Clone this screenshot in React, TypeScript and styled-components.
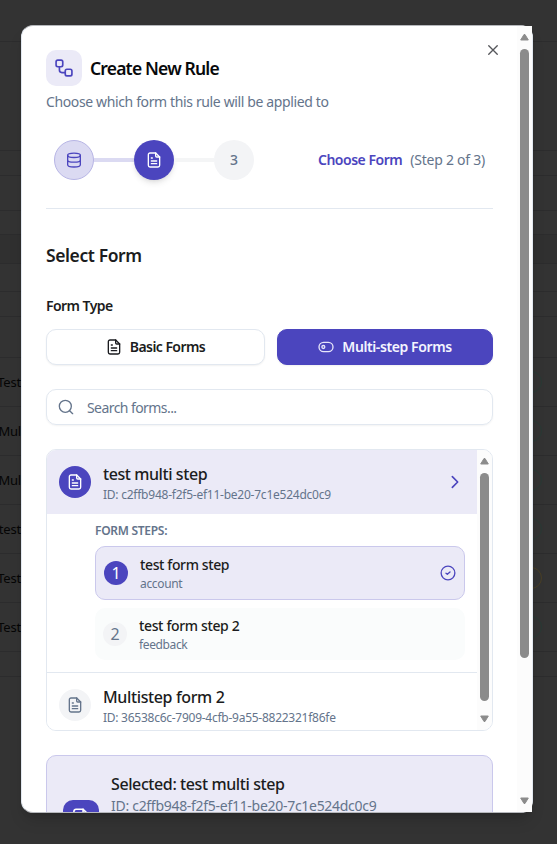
import React from "react";
import styled, { createGlobalStyle, css } from "styled-components";

const INDIGO = "#4b45be";
const LAVENDER = "#ebeaf7";
const MUTED = "#64748b";
const INK = "#1b1c20";
const BORDER = "#e2e8f0";

const GlobalStyle = createGlobalStyle`
  * { box-sizing: border-box; }
  html, body { margin: 0; height: 100%; overflow: hidden; }
  body { font-family: "Noto Sans", "Open Sans", sans-serif; color: ${INK}; background: #333; }
  #root { height: 100%; }
  p, h1, h2, h3 { margin: 0; }
  button { font: inherit; }
  svg { display: block; flex: none; }
`;

const Screen = styled.div`
  position: relative;
  width: 557px;
  height: 844px;
  overflow: hidden;
  background: #333;
`;

const Backdrop = styled.div`
  display: flex;
  flex-direction: column;
`;

const BackRow = styled.div<{ $h: number; $dark?: boolean }>`
  display: flex;
  align-items: center;
  justify-content: space-between;
  height: ${(p) => p.$h}px;
  flex: none;
  border-bottom: 1px solid #2c2c2d;
  background: ${(p) => (p.$dark ? "#303030" : "#333")};
`;

const BackText = styled.span`
  display: flex;
  justify-content: flex-end;
  width: 21px;
  font-size: 13px;
  letter-spacing: -0.2px;
  color: #050505;
  white-space: nowrap;
`;

const BackBadge = styled.span<{ $c: string }>`
  width: 40px;
  height: 22px;
  margin-right: 15px;
  border: 1px solid ${(p) => p.$c};
  border-radius: 11px;
`;

const Dialog = styled.section`
  position: absolute;
  left: 21px;
  top: 25px;
  width: 512px;
  height: 788px;
  display: flex;
  border: 1px solid ${BORDER};
  border-top-color: #b6b8bc;
  border-bottom-color: #b6b8bc;
  border-radius: 12px;
  background: #fff;
  box-shadow: 0 10px 15px -3px rgba(0, 0, 0, 0.15), 0 4px 6px -4px rgba(0, 0, 0, 0.15);
`;

const DialogBody = styled.div`
  width: 495px;
  height: 786px;
  padding: 24px;
  overflow: hidden;
  border-radius: 11px 0 0 11px;
`;

const Scrollbar = styled.div`
  display: flex;
  flex-direction: column;
  align-items: center;
  width: 15px;
  flex: none;
  background: #fcfcfc;
`;

const Thumb = styled.div<{ $h: number }>`
  width: 9px;
  height: ${(p) => p.$h}px;
  border-radius: 5px;
  background: #8b8b8b;
`;

const ArrowSlot = styled.div<{ $top: number; $bottom: number }>`
  padding: ${(p) => p.$top}px 0 ${(p) => p.$bottom}px;
`;

const Spacer = styled.div`
  flex: 1;
`;

const CloseButton = styled.button`
  position: absolute;
  right: 33px;
  top: 18px;
  padding: 0;
  border: 0;
  background: none;
  color: #55565a;
`;

const TitleRow = styled.header`
  display: flex;
  align-items: center;
  gap: 8px;
  height: 36px;
`;

const TitleIcon = styled.div`
  display: grid;
  place-items: center;
  width: 36px;
  height: 36px;
  border-radius: 10px;
  background: ${LAVENDER};
  color: ${INDIGO};
`;

type TextProps = { $size: number; $line: number; $weight?: number; $track?: number; $color?: string };
const textStyle = css<TextProps>`
  font-size: ${(p) => p.$size}px;
  line-height: ${(p) => p.$line}px;
  font-weight: ${(p) => p.$weight ?? 400};
  letter-spacing: ${(p) => p.$track ?? 0}px;
  color: ${(p) => p.$color ?? INK};
  white-space: nowrap;
`;

const Heading = styled.h2<TextProps>`
  ${textStyle}
`;

const Label = styled.p<TextProps>`
  ${textStyle}
`;

const Caption = styled(Label)`
  padding-top: 1px;
  margin-bottom: -1px;
`;

const Description = styled(Label)`
  margin-top: 6px;
`;

const Stepper = styled.div`
  display: flex;
  align-items: center;
  height: 97px;
  padding: 0 8px;
  border-bottom: 1px solid ${BORDER};
`;

const StepDot = styled.div<{ $state: "done" | "active" | "idle" }>`
  display: grid;
  place-items: center;
  width: 40px;
  height: 40px;
  flex: none;
  border-radius: 50%;
  ${(p) =>
    p.$state === "done"
      ? `background: #dbdaf2; border: 1px solid #b7b5e5; color: ${INDIGO};`
      : p.$state === "active"
        ? `background: ${INDIGO}; color: #fff; box-shadow: 0 4px 6px -1px rgba(0,0,0,.1), 0 2px 4px -2px rgba(0,0,0,.1);`
        : `background: #f3f4f6; color: ${MUTED};`}
`;

const StepLine = styled.div<{ $done?: boolean }>`
  width: 40px;
  height: 4px;
  background: ${(p) => (p.$done ? "#dbdaf2" : "#f4f5f6")};
`;

const StepCaption = styled.div`
  display: flex;
  gap: 8px;
  margin-left: auto;
`;

const SectionTitle = styled(Heading)`
  margin-top: 32px;
`;

const FieldLabel = styled(Label)`
  margin-top: 27px;
`;

const TypeRow = styled.div`
  display: grid;
  grid-template-columns: 219px 216px;
  gap: 12px;
  margin-top: 13px;
`;

const TypeButton = styled.button<{ $active?: boolean }>`
  display: flex;
  align-items: center;
  justify-content: center;
  gap: 8px;
  height: 36px;
  padding: 0;
  border: 1px solid ${(p) => (p.$active ? INDIGO : BORDER)};
  border-radius: 10px;
  background: ${(p) => (p.$active ? INDIGO : "#fff")};
  color: ${(p) => (p.$active ? "#e6e5fa" : INK)};
  box-shadow: 0 1px 2px rgba(0, 0, 0, 0.06);
`;

const SearchBox = styled.div`
  display: flex;
  align-items: center;
  gap: 13px;
  height: 36px;
  margin-top: 24px;
  padding: 0 11px;
  border: 1px solid ${BORDER};
  border-radius: 10px;
  box-shadow: 0 1px 2px rgba(0, 0, 0, 0.05);
  color: ${MUTED};
`;

const SearchText = styled(Label)`
  padding-top: 2px;
`;

const FormList = styled.div`
  display: flex;
  height: 282px;
  margin-top: 24px;
  overflow: hidden;
  border: 1px solid ${BORDER};
  border-radius: 10px;
`;

const ListContent = styled.div`
  width: 430px;
  overflow: hidden;
`;

const FormRow = styled.div<{ $active?: boolean }>`
  display: flex;
  align-items: center;
  gap: 12px;
  height: 64px;
  padding: 0 14px 0 12px;
  background: ${(p) => (p.$active ? LAVENDER : "#fff")};
  color: ${INDIGO};
`;

const RoundIcon = styled.div<{ $active?: boolean; $size: number }>`
  display: grid;
  place-items: center;
  flex: none;
  width: ${(p) => p.$size}px;
  height: ${(p) => p.$size}px;
  border-radius: 50%;
  background: ${(p) => (p.$active ? INDIGO : "#f3f4f6")};
  color: ${(p) => (p.$active ? "#fff" : MUTED)};
`;

const TextStack = styled.div`
  flex: 1;
  min-width: 0;
`;

const StepsPanel = styled.div`
  height: 159px;
  padding: 8px 12px 0 48px;
  border-bottom: 1px solid ${BORDER};
`;

const FormStep = styled.div<{ $active?: boolean }>`
  display: flex;
  align-items: center;
  gap: 12px;
  height: ${(p) => (p.$active ? 54 : 52)}px;
  margin-top: 8px;
  padding: 0 8px;
  border-radius: 10px;
  border: ${(p) => (p.$active ? "1px solid #cac8ec" : "0")};
  background: ${(p) => (p.$active ? LAVENDER : "#fafcfc")};
  color: ${INDIGO};
`;

const SelectedCard = styled.div`
  display: flex;
  gap: 12px;
  height: 110px;
  margin-top: 24px;
  padding: 17px 16px;
  border: 1px solid #cac8ec;
  border-radius: 10px;
  background: ${LAVENDER};
`;

const SelectedIcon = styled.div`
  display: grid;
  place-items: center;
  width: 36px;
  height: 36px;
  margin-top: 27px;
  border-radius: 10px;
  background: ${INDIGO};
  color: #fff;
`;

const Stroke = ({ size = 16, width = 1.5, children }: { size?: number; width?: number; children: React.ReactNode }) => (
  <svg width={size} height={size} viewBox="0 0 24 24" fill="none" stroke="currentColor" strokeWidth={width} strokeLinecap="round" strokeLinejoin="round">
    {children}
  </svg>
);

const DocIcon = ({ size = 16, width = 2 }: { size?: number; width?: number }) => (
  <Stroke size={size} width={width}>
    <path d="M14.5 1.5H6A2.5 2.5 0 0 0 3.5 4v16A2.5 2.5 0 0 0 6 22.5h12a2.5 2.5 0 0 0 2.5-2.5V7.5z" />
    <path d="M14.5 1.5V6A1.5 1.5 0 0 0 16 7.5h4.5M8 9h1.5M8 13.5h8M8 17.5h8" />
  </Stroke>
);

const FlowIcon = () => (
  <Stroke size={20} width={2}>
    <rect x="2.5" y="2.5" width="8" height="8" rx="2" />
    <rect x="13.5" y="13.5" width="8" height="8" rx="2" />
    <path d="M6.5 10.5v4a3 3 0 0 0 3 3h4" />
  </Stroke>
);

const DatabaseIcon = () => (
  <Stroke size={16} width={2}>
    <ellipse cx="12" cy="5" rx="9.5" ry="3.3" />
    <path d="M2.5 5v14c0 2 4 3.5 9.5 3.5s9.5-1.5 9.5-3.5V5M2.5 12c0 2 4 3.3 9.5 3.3s9.5-1.3 9.5-3.3" />
  </Stroke>
);

const ToggleIcon = () => (
  <Stroke size={16} width={2}>
    <rect x="1.5" y="5" width="21" height="14" rx="7" />
    <circle cx="8" cy="12" r="2.2" />
  </Stroke>
);

const SearchIcon = () => (
  <Stroke size={16} width={2}>
    <circle cx="11" cy="11" r="9" />
    <path d="m17.5 17.5 4.5 4.5" />
  </Stroke>
);

const ChevronIcon = () => (
  <Stroke size={16} width={2.5}>
    <path d="m8 4 8 8-8 8" />
  </Stroke>
);

const CheckIcon = () => (
  <Stroke size={16} width={2}>
    <circle cx="12" cy="12" r="10.3" />
    <path d="m9 12.3 2 1.7 4-3.5" />
  </Stroke>
);

const CloseIcon = () => (
  <Stroke size={12} width={2.7}>
    <path d="M3.5 3.5l17 17M20.5 3.5l-17 17" />
  </Stroke>
);

const ArrowIcon = ({ down }: { down?: boolean }) => (
  <svg width="9" height="8" viewBox="0 0 9 8" fill="#8b8b8b" stroke="#8b8b8b" strokeLinejoin="round">
    <path d={down ? "M.7 1h7.6L5 6.5H4z" : "M.7 7h7.6L5 1.5H4z"} />
  </svg>
);

const BADGE_GREEN = "#293a35";
const backRows: { h: number; dark?: boolean; text?: string; badge?: string }[] = [
  { h: 42 }, { h: 109 }, { h: 25 }, { h: 35 }, { h: 24 }, { h: 29, dark: true }, { h: 28 }, { h: 25 }, { h: 41 },
  { h: 49, text: "Test", badge: BADGE_GREEN },
  { h: 49, text: "Mul", badge: BADGE_GREEN },
  { h: 49, text: "Mul", badge: BADGE_GREEN },
  { h: 49, text: "test", badge: BADGE_GREEN },
  { h: 49, text: "Test", badge: "#493f25" },
  { h: 49, text: "Test", badge: BADGE_GREEN },
  { h: 25 },
];

export default function App() {
  return (
    <>
      <GlobalStyle />
      <Screen>
        <Backdrop>
          {backRows.map((r, i) => (
            <BackRow key={i} $h={r.h} $dark={r.dark}>
              {r.text && <BackText>{r.text}</BackText>}
              {r.badge && <BackBadge $c={r.badge} />}
            </BackRow>
          ))}
        </Backdrop>
        <Dialog>
          <DialogBody>
            <TitleRow>
              <TitleIcon><FlowIcon /></TitleIcon>
              <Heading $size={17.5} $line={28} $weight={600} $track={-0.82} $color="#08090b">Create New Rule</Heading>
            </TitleRow>
            <Description $size={14} $line={20} $track={-0.37} $color={MUTED}>Choose which form this rule will be applied to</Description>
            <Stepper>
              <StepDot $state="done"><DatabaseIcon /></StepDot>
              <StepLine $done />
              <StepDot $state="active"><DocIcon /></StepDot>
              <StepLine />
              <StepDot $state="idle"><Label as="span" $size={14} $line={20} $weight={500} $color={MUTED}>3</Label></StepDot>
              <StepCaption>
                <Label $size={14} $line={20} $weight={600} $track={-0.48} $color={INDIGO}>Choose Form</Label>
                <Label $size={14} $line={20} $track={-0.24} $color={MUTED}>(Step 2 of 3)</Label>
              </StepCaption>
            </Stepper>
            <SectionTitle $size={17.5} $line={28} $weight={600} $track={-0.4}>Select Form</SectionTitle>
            <FieldLabel $size={14} $line={20} $weight={600} $track={-0.55}>Form Type</FieldLabel>
            <TypeRow>
              <TypeButton>
                <DocIcon />
                <Label as="span" $size={14} $line={20} $weight={600} $track={-0.56}>Basic Forms</Label>
              </TypeButton>
              <TypeButton $active>
                <ToggleIcon />
                <Label as="span" $size={14} $line={20} $weight={600} $track={-0.4} $color="#f4f4ff">Multi-step Forms</Label>
              </TypeButton>
            </TypeRow>
            <SearchBox>
              <SearchIcon />
              <SearchText as="span" $size={14} $line={20} $track={-0.57} $color={MUTED}>Search forms...</SearchText>
            </SearchBox>
            <FormList>
              <ListContent>
                <FormRow $active>
                  <RoundIcon $active $size={32}><DocIcon /></RoundIcon>
                  <TextStack>
                    <Label $size={16} $line={24} $weight={500} $track={-0.42}>test multi step</Label>
                    <Caption $size={12} $line={16} $track={-0.24} $color={MUTED}>ID: c2ffb948-f2f5-ef11-be20-7c1e524dc0c9</Caption>
                  </TextStack>
                  <ChevronIcon />
                </FormRow>
                <StepsPanel>
                  <Caption $size={12} $line={16} $weight={600} $track={-0.28} $color={MUTED}>FORM STEPS:</Caption>
                  <FormStep $active>
                    <RoundIcon $active $size={24}><Label as="span" $size={16} $line={24} $color="#fff">1</Label></RoundIcon>
                    <TextStack>
                      <Label $size={14} $line={20} $weight={500} $track={-0.38}>test form step</Label>
                      <Caption $size={12} $line={16} $track={-0.33} $color={MUTED}>account</Caption>
                    </TextStack>
                    <CheckIcon />
                  </FormStep>
                  <FormStep>
                    <RoundIcon $size={24}><Label as="span" $size={16} $line={24} $color={MUTED}>2</Label></RoundIcon>
                    <TextStack>
                      <Label $size={14} $line={20} $weight={500} $track={-0.36}>test form step 2</Label>
                      <Caption $size={12} $line={16} $track={-0.38} $color={MUTED}>feedback</Caption>
                    </TextStack>
                  </FormStep>
                </StepsPanel>
                <FormRow>
                  <RoundIcon $size={32}><DocIcon /></RoundIcon>
                  <TextStack>
                    <Label $size={16} $line={24} $weight={500} $track={-0.37}>Multistep form 2</Label>
                    <Caption $size={12} $line={16} $track={-0.26} $color={MUTED}>ID: 36538c6c-7909-4cfb-9a55-8822321f86fe</Caption>
                  </TextStack>
                </FormRow>
              </ListContent>
              <Scrollbar>
                <ArrowSlot $top={7} $bottom={8}><ArrowIcon /></ArrowSlot>
                <Thumb $h={228} />
                <Spacer />
                <ArrowSlot $top={0} $bottom={7}><ArrowIcon down /></ArrowSlot>
              </Scrollbar>
            </FormList>
            <SelectedCard>
              <SelectedIcon><DocIcon size={20} /></SelectedIcon>
              <TextStack>
                <Label $size={16} $line={22} $weight={500} $track={-0.4}>Selected: test multi step</Label>
                <Caption $size={14} $line={20} $track={-0.29} $color={MUTED}>ID: c2ffb948-f2f5-ef11-be20-7c1e524dc0c9</Caption>
              </TextStack>
            </SelectedCard>
          </DialogBody>
          <Scrollbar>
            <ArrowSlot $top={7} $bottom={8}><ArrowIcon /></ArrowSlot>
            <Thumb $h={609} />
            <Spacer />
            <ArrowSlot $top={0} $bottom={7}><ArrowIcon down /></ArrowSlot>
          </Scrollbar>
          <CloseButton aria-label="Close"><CloseIcon /></CloseButton>
        </Dialog>
      </Screen>
    </>
  );
}
